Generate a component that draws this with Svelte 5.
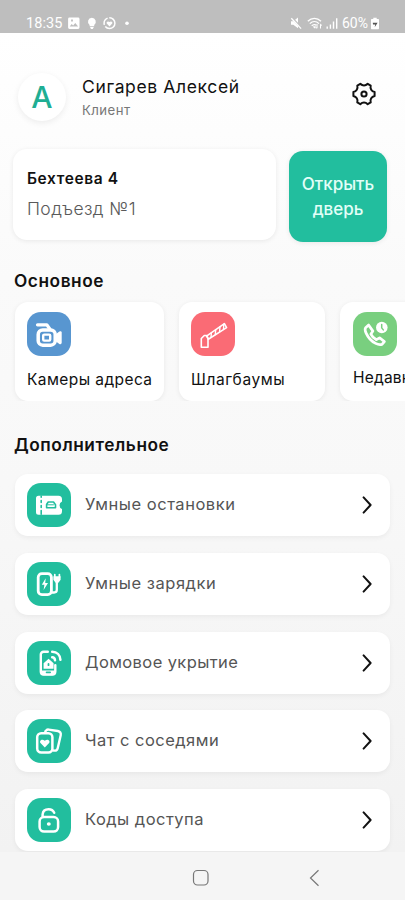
<script lang="ts">
  type IconName =
    | "camera"
    | "barrier"
    | "calls"
    | "ticket"
    | "charger"
    | "shelter"
    | "chat"
    | "lock";

  interface Service {
    label: string;
    icon: IconName;
    color: string;
    spacing: number;
  }

  interface MenuItem {
    label: string;
    icon: IconName;
    spacing: number;
  }

  const services: Service[] = [
    { label: "Камеры адреса", icon: "camera", color: "#5896d0", spacing: 0.42 },
    { label: "Шлагбаумы", icon: "barrier", color: "#fa6b75", spacing: 0.6 },
    { label: "Недавние", icon: "calls", color: "#79cf7f", spacing: 0.2 },
  ];

  const menu: MenuItem[] = [
    { label: "Умные остановки", icon: "ticket", spacing: 0.53 },
    { label: "Умные зарядки", icon: "charger", spacing: 0.53 },
    { label: "Домовое укрытие", icon: "shelter", spacing: 0.4 },
    { label: "Чат с соседями", icon: "chat", spacing: 0.47 },
    { label: "Коды доступа", icon: "lock", spacing: 0.47 },
  ];
</script>

{#snippet glyph(name: IconName)}
  <svg class="glyph" viewBox="0 0 44 44" aria-hidden="true">
    {#if name === "camera"}
      <path d="M10.5 12.8h9.300l3.200 4.400" stroke-width="3.200" />
      <rect x="11.200" y="18" width="17" height="15.200" rx="4.500" stroke-width="3.500" />
      <rect x="16.200" y="22.600" width="7" height="6" rx="1" stroke-width="2.400" />
      <path class="solid" d="M29 22l3.400-2.600a1.500 1.500 0 0 1 2.300 1.200v10.200a1.500 1.500 0 0 1-2.300 1.200L29 29.500z" />
    {:else if name === "barrier"}
      <path d="M10.3 35.2V26.5l3-3h2.4l1.3 2.6v9.1z" stroke-width="1.6" />
      <path d="M15.5 24.2L33.4 11.6l2.2 4L17.3 27.2z" stroke-width="1.6" />
      <path d="M20.4 20.8l-.4 4.5M24.7 17.8l-.4 4.7M29 14.8l-.4 4.8M32.8 12.3l-.3 4.7" stroke-width="1.4" />
    {:else if name === "calls"}
      <path
        d="M15.6 13l-3 2.7c-.7 1-.4 3.4.5 5.4 2 4.4 5.4 8.2 9.5 10.3 2.3 1.2 4.9 1.6 6.6.8l2.2-2.6-4.8-3.8-3.2 1.9c-2.3-1.1-4.4-3.2-5.5-5.6l2-3z"
        stroke-width="2.7"
      />
      <circle class="solid" cx="28.8" cy="15.5" r="5.8" />
      <path class="cutout" d="M28.7 12.4v3.5l1.6 2" stroke-width="1.5" />
    {:else if name === "ticket"}
      <path
        class="solid"
        d="M11.5 12.8h20a3.5 3.5 0 0 1 3.5 3.5v2.2a4 4 0 0 0 0 7.4v2.4a3.5 3.5 0 0 1-3.5 3.5h-20A2.5 2.5 0 0 1 9 29.3V15.3a2.5 2.5 0 0 1 2.500-2.500z"
      />
      <path class="cutout" d="M14.2 13v1.3M14.2 17.5v2M14.2 22.5v2M14.2 27.5v3.8" stroke-width="1.6" />
      <path class="cutout" d="M19.600 24.800v-3.300l1.600-2.500h5.300l2 2.700v3.100z" stroke-width="1.600" />
      <path class="cutout" d="M20 21.800h6.500" stroke-width="1" />
    {:else if name === "charger"}
      <rect x="11.2" y="11.6" width="13.2" height="21" rx="3.7" stroke-width="2.8" />
      <path class="solid" d="M18.7 16.2L14.8 22.8h2.6l-.8 5.2 4.4-7h-2.8z" />
      <path d="M25 30.5h2.1c2 0 2.7-1.1 2.7-2.7V20" stroke-width="2.3" />
      <path class="solid" d="M26.4 14.2h7.2v3.6l-2.2 3h-2.8l-2.2-3z" />
      <path d="M27.8 12.6v2.6M32.4 12.6v2.6" stroke-width="1.7" />
    {:else if name === "shelter"}
      <path d="M20.8 10.8h-4.2c-1.8 0-2.8 1.1-2.8 2.8v17c0 2 1 3 3 3h8.5c2 0 3-1 3-3v-6.5" stroke-width="2.4" />
      <path class="solid" d="M16.6 22.3l5-4.5 5 4.500v5.400h-10zM14 29.500h14v3.200l-1.800 1.500H15.600L14 32.700z" />
      <path class="cutout" d="M21.5 23v1.2M19.6 31.3h3.5" stroke-width="1.8" />
      <path d="M25.2 10.8c4.9.2 8 3.5 8.2 8M25.2 16.2c1.9.1 2.7 1.1 2.8 3" stroke-width="2.5" />
    {:else if name === "chat"}
      <path d="M18.3 12.4l1.4-1.4c.6-.5 1.2-.5 2-.4l9.1 1.4c2.4.5 3.4 2 2.9 4.2l-3 13c-.5 2-2 2.8-4.2 2.3" stroke-width="2.4" />
      <rect x="10.2" y="14.2" width="15.2" height="19.3" rx="4" stroke-width="2.5" />
      <path class="solid" d="M17.8 28.4l-4.3-4.3c-1.6-2.2 1.5-5 4.3-2.3 2.8-2.7 5.9.1 4.3 2.3z" />
    {:else}
      <rect x="12.6" y="19" width="18.5" height="14.6" rx="4.5" stroke-width="2.5" />
      <path d="M15.6 18.5v-2c.3-3.4 2.7-5.2 6-5.2 2.6 0 4.6 1.2 5.6 3.5" stroke-width="2.5" />
      <ellipse class="solid" cx="21.8" cy="26" rx="2" ry="1.7" />
    {/if}
  </svg>
{/snippet}

<div class="screen">
  <div class="status-bar">
    <span class="clock">18:35</span>
    <svg class="status-left" width="64" height="14" viewBox="0 0 64 14" fill="#fff">
      <path
        fill-rule="evenodd"
        d="M2.5 1.5h8.6a1.4 1.4 0 0 1 1.4 1.4v8.7a1.4 1.4 0 0 1-1.4 1.4H2.5a1.4 1.4 0 0 1-1.4-1.4V2.9a1.4 1.4 0 0 1 1.4-1.4zM2.7 10.6h8.4L8.3 6.9l-2.2 2.5-1.4-1.5zM4.1 3.6v1.8h1.8V3.6z"
      />
      <path d="M24.800 1.700a4 4 0 0 1 2.400 7.200v1.300h-4.600V8.900a4 4 0 0 1 2.200-7.200zM23 11h3.800l-1 2h-1.800z" />
      <circle cx="42.500" cy="7.200" r="5.400" fill="none" stroke="#fff" stroke-width="1.500" stroke-dasharray="13 1.800 8 1.800" />
      <path d="M42.500 10.400L39.800 7.600c-.9-1.500 1-3.100 2.700-1.600 1.700-1.500 3.600.1 2.700 1.600z" />
      <circle cx="60" cy="7.200" r="1.800" />
    </svg>
    <span class="spacer"></span>
    <svg class="status-right" width="50" height="14" viewBox="0 0 50 14" fill="#fff">
      <path d="M1 5.2h2.3L8 1.6v10.7L3.3 8.8H1z" />
      <path d="M1.8 1.8l10 10.6" stroke="#bebebe" stroke-width="2.2" />
      <path d="M1.300 2.300l9.800 10.300" stroke="#fff" stroke-width="1.300" />
      <g fill="none" stroke="#fff" stroke-width="1.300">
        <path d="M17.8 5.3c3.9-3.8 9.3-3.8 13.2 0M19.8 7.6c2.7-2.6 6.5-2.6 9.2 0M21.7 9.8c1.6-1.5 3.6-1.5 4.6-.4" />
        <path d="M27 8v4.3l-1.3-1.2M30.5 12.5V8.2l1.5 1.4" stroke-width="1" />
      </g>
      <path d="M23 10.3h2.6v2H24z" />
      <path d="M36.5 10.6h1.4v2.2h-1.4zM39.7 8.4h1.4v4.4h-1.4zM42.8 5.4h1.4v7.4h-1.4zM46 2.2h1.4v10.6H46z" />
    </svg>
    <span class="percent">60%</span>
    <svg class="battery" width="8" height="13" viewBox="0 0 8 13">
      <path fill="#fff" d="M2.3.8h3.4v1.1H7c.6 0 1 .4 1 1v8.3c0 .6-.4 1-1 1H1c-.6 0-1-.4-1-1V2.9c0-.6.4-1 1-1h1.3z" />
      <path fill="#555" d="M1.8 5.7h4.8L3.7 10.2l.5-2.8H2z" />
    </svg>
  </div>

  <main class="content">
    <header class="profile">
      <div class="avatar">А</div>
      <div class="person">
        <div class="name">Сигарев Алексей</div>
        <div class="role">Клиент</div>
      </div>
      <button class="settings" type="button" aria-label="Настройки">
        <svg width="26" height="26" viewBox="0 0 26 26">
          <path
            d="M9.3 2.8c1.2 1.2 2.4 1.7 3.7 1.7s2.5-.5 3.7-1.7l3 1.8c-.4 1.6-.2 3 .5 4.1s1.8 1.9 3.4 2.3v4c-1.6.4-2.7 1.2-3.4 2.3s-.9 2.5-.5 4.1l-3 1.8c-1.2-1.2-2.4-1.7-3.7-1.7s-2.5.5-3.7 1.7l-3-1.8c.4-1.6.2-3-.5-4.1S4 15.4 2.4 15v-4C4 10.6 5.1 9.8 5.8 8.700s.9-2.500.5-4.100z"
          />
          <circle cx="13" cy="13" r="2.6" />
        </svg>
      </button>
    </header>

    <section class="address-row">
      <div class="address-card">
        <div class="street">Бехтеева 4</div>
        <div class="entrance">Подъезд №1</div>
      </div>
      <button class="open-door" type="button">
        <span>Открыть</span>
        <span>дверь</span>
      </button>
    </section>

    <h2 class="main-title">Основное</h2>
    <div class="services">
      {#each services as service}
        <div class="service" class:narrow={service.icon === "calls"}>
          <div class="tile" style="--tile: {service.color}">
            {@render glyph(service.icon)}
          </div>
          <div class="service-label" style="letter-spacing: {service.spacing}px">{service.label}</div>
        </div>
      {/each}
    </div>

    <h2 class="extra-title">Дополнительное</h2>
    <div class="menu">
      {#each menu as item}
        <div class="menu-item">
          <div class="tile">
            {@render glyph(item.icon)}
          </div>
          <span class="menu-label" style="letter-spacing: {item.spacing}px">{item.label}</span>
          <svg class="chevron" width="10" height="18" viewBox="0 0 10 18">
            <path d="M1.6 1.4L8.6 9l-7 7.6" />
          </svg>
        </div>
      {/each}
    </div>
  </main>

  <nav class="nav-bar">
    <svg width="405" height="48" viewBox="0 0 405 48">
      <rect x="193.5" y="18.5" width="14.5" height="14.5" rx="4" />
      <path d="M318.5 18.3l-8 7.7 8 7.7" />
    </svg>
  </nav>
</div>

<style>
  :global(body) {
    background: #f5f5f5;
  }

  .screen {
    display: flex;
    flex-direction: column;
    width: 405px;
    height: 900px;
    overflow: hidden;
    font-family: Inter, "Noto Sans", sans-serif;
    color: #111;
    background: #f5f5f5;
  }

  .status-bar {
    display: flex;
    align-items: flex-start;
    flex: none;
    box-sizing: border-box;
    height: 33px;
    padding: 16px 26px 0 26px;
    background: #bebebe;
    color: #fff;
    font-family: Roboto, sans-serif;
    font-size: 14.5px;
    line-height: 15px;
  }

  .clock {
    width: 41px;
    letter-spacing: 0.1px;
  }

  .spacer {
    flex: 1;
  }

  .status-right {
    margin-right: 2px;
  }

  .percent {
    width: 29px;
    font-size: 14px;
    white-space: nowrap;
  }

  .battery {
    margin-top: 1px;
  }

  .content {
    flex: none;
    height: 819px;
    overflow: hidden;
    background: linear-gradient(#fff, #fafafa 30%, #f8f8f8 55%, #f2f2f2);
  }

  .profile {
    display: flex;
    align-items: center;
    height: 48px;
    padding: 40px 28px 0 18px;
  }

  .avatar {
    width: 48px;
    height: 48px;
    border-radius: 50%;
    background: #fff;
    box-shadow: 0 2px 6px rgba(0, 0, 0, 0.07);
    color: #1fae93;
    font-size: 30px;
    font-weight: 500;
    line-height: 48px;
    text-align: center;
  }

  .person {
    flex: 1;
    margin-left: 16px;
  }

  .name {
    margin-top: 1px;
    font-size: 17.5px;
    line-height: 24px;
    letter-spacing: 0.63px;
  }

  .role {
    color: #777;
    font-size: 13.2px;
    line-height: 22px;
    letter-spacing: 0.45px;
  }

  .settings {
    padding: 0;
    border: 0;
    background: none;
    line-height: 0;
  }

  .settings svg {
    margin-top: -7px;
    fill: none;
    stroke: #111;
    stroke-width: 2;
    stroke-linejoin: round;
  }

  .address-row {
    display: flex;
    gap: 13px;
    padding: 28px 18px 0 13px;
  }

  .address-card {
    box-sizing: border-box;
    width: 263px;
    height: 91px;
    padding: 18px 14px;
    border-radius: 14px;
    background: #fff;
    box-shadow: 0 1px 5px rgba(0, 0, 0, 0.08);
  }

  .street {
    font-size: 15.5px;
    font-weight: 600;
    line-height: 23px;
    letter-spacing: 0.6px;
  }

  .entrance {
    margin-top: 6px;
    color: #5a5a5a;
    font-size: 17.5px;
    font-weight: 300;
    line-height: 26px;
    letter-spacing: 0.4px;
  }

  .open-door {
    display: flex;
    flex-direction: column;
    align-items: center;
    justify-content: center;
    width: 98px;
    height: 91px;
    margin-top: 2px;
    padding: 0;
    border: 0;
    border-radius: 14px;
    background: #22be9e;
    box-shadow: 0 1px 5px rgba(0, 0, 0, 0.08);
    color: #e2fff8;
    font-family: inherit;
    font-size: 17px;
    font-weight: 500;
    line-height: 25px;
  }

  h2 {
    margin: 0;
    padding-left: 14px;
    font-size: 17.3px;
    font-weight: 600;
    line-height: 24px;
    letter-spacing: 0.55px;
  }

  .main-title {
    padding-top: 27px;
  }

  .services {
    display: flex;
    gap: 15px;
    height: 99px;
    padding: 9px 0 0 15px;
    overflow: hidden;
  }

  .service {
    flex: none;
    box-sizing: border-box;
    width: 149px;
    height: 99px;
    padding: 10px 12px;
    border-radius: 13px;
    background: #fff;
    box-shadow: 0 1px 5px rgba(0, 0, 0, 0.07);
  }

  .service + .service {
    width: 146px;
  }

  .service-label {
    margin-top: 13px;
    font-size: 15.5px;
    line-height: 22px;
    white-space: nowrap;
  }

  .service.narrow {
    padding-left: 13px;
  }

  .narrow .service-label {
    margin-top: 11px;
  }

  .tile {
    flex: none;
    width: 44px;
    height: 44px;
    border-radius: 14px;
    background: var(--tile, #22be9e);
  }

  .glyph {
    display: block;
    width: 44px;
    height: 44px;
    fill: none;
    stroke: #fff;
    stroke-linecap: round;
    stroke-linejoin: round;
  }

  .glyph .solid {
    fill: #fff;
    stroke: none;
  }

  .glyph .cutout {
    stroke: var(--tile, #22be9e);
  }

  .extra-title {
    padding-top: 32px;
  }

  .menu {
    display: flex;
    flex-direction: column;
    gap: 16.75px;
    padding: 17px 15px 0;
  }

  .menu-item {
    display: flex;
    align-items: center;
    flex: none;
    box-sizing: border-box;
    height: 62px;
    padding: 0 18px 0 12px;
    border-radius: 13px;
    background: #fff;
    box-shadow: 0 2px 5px rgba(0, 0, 0, 0.05);
  }

  .menu-label {
    flex: 1;
    margin: -2px 0 0 14px;
    color: #555;
    font-size: 16.5px;
    line-height: 24px;
  }

  .chevron {
    fill: none;
    stroke: #111;
    stroke-width: 2;
    stroke-linecap: round;
    stroke-linejoin: round;
  }

  .nav-bar {
    flex: none;
    height: 48px;
    background: #f5f5f5;
  }

  .nav-bar svg {
    display: block;
    fill: none;
    stroke: #777;
    stroke-width: 1.2;
  }
</style>
